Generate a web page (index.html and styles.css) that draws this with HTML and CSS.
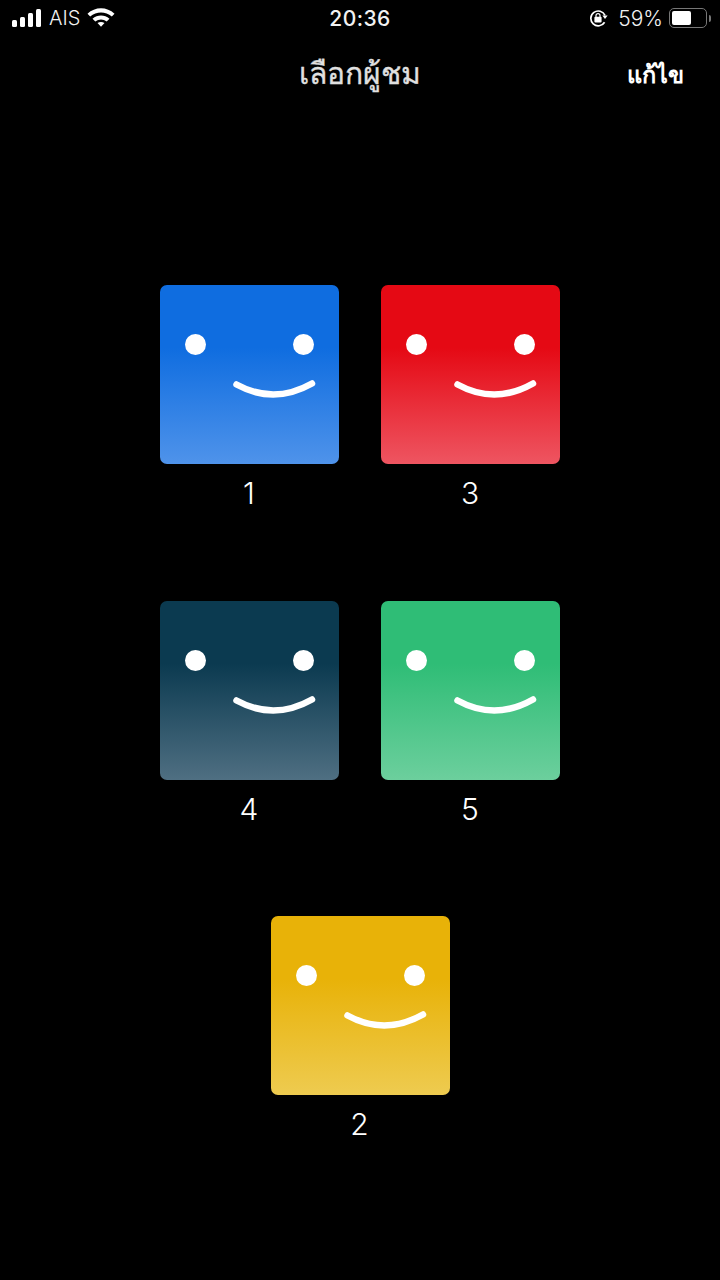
FILE: index.html
```html
<!DOCTYPE html>
<html lang="th">
<head>
    <meta charset="UTF-8">
    <meta name="viewport" content="width=device-width, initial-scale=1.0">
    <title>เลือกผู้ชม</title>
    <link rel="stylesheet" href="styles.css">
</head>
<body>
    <div class="status-bar">
        <div class="status-left">
            <div class="signal">
                <span class="bar bar-1"></span>
                <span class="bar bar-2"></span>
                <span class="bar bar-3"></span>
                <span class="bar bar-4"></span>
            </div>
            <span class="carrier">AIS</span>
            <svg class="wifi" width="28" height="20" viewBox="0 0 28 20">
                <path d="M.5 6.8C8 -.6 20 -.6 27.5 6.8L24.8 9.6C18.500 4 9.500 4 3.200 9.600Z" fill="#fff"/>
                <path d="M5.500 11.700C10.500 7.300 17.500 7.300 22.500 11.700L19.700 14.500C16.300 11.800 11.700 11.800 8.300 14.500Z" fill="#fff"/>
                <path d="M10.500 16C12.600 14.500 15.400 14.500 17.500 16L14 19.800Z" fill="#fff"/>
            </svg>
        </div>
        <div class="status-time">20:36</div>
        <div class="status-right">
            <svg class="rotation-lock" width="19" height="18" viewBox="0 0 19 18">
                <path d="M15.6 13.2A7.4 7.4 0 1 1 16 6.4" fill="none" stroke="#fff" stroke-width="1.7"/>
                <path d="M13.4 6.4H18.6L16 10Z" fill="#fff"/>
                <rect x="5.4" y="7.8" width="7.2" height="5.6" rx="1" fill="#fff"/>
                <path d="M7 8V6.6a2 2 0 0 1 4 0V8" fill="none" stroke="#fff" stroke-width="1.2"/>
            </svg>
            <span class="battery-text">59%</span>
            <div class="battery">
                <div class="battery-level"></div>
            </div>
            <div class="battery-cap"></div>
        </div>
    </div>

    <header class="nav-bar">
        <h1 class="nav-title">เลือกผู้ชม</h1>
        <a class="nav-edit" href="#">แก้ไข</a>
    </header>

    <main class="profiles">
        <div class="profile">
            <div class="avatar avatar-blue">
                <svg class="face" viewBox="0 0 179 179">
                    <circle cx="35.5" cy="59.5" r="10.5"/>
                    <circle cx="143.5" cy="59.5" r="10.5"/>
                    <path d="M76.5 99.5Q114 120 152 98.5"/>
                </svg>
            </div>
            <div class="profile-name">1</div>
        </div>
        <div class="profile">
            <div class="avatar avatar-red">
                <svg class="face" viewBox="0 0 179 179">
                    <circle cx="35.5" cy="59.5" r="10.5"/>
                    <circle cx="143.5" cy="59.5" r="10.5"/>
                    <path d="M76.5 99.5Q114 120 152 98.5"/>
                </svg>
            </div>
            <div class="profile-name">3</div>
        </div>
        <div class="profile">
            <div class="avatar avatar-navy">
                <svg class="face" viewBox="0 0 179 179">
                    <circle cx="35.5" cy="59.5" r="10.5"/>
                    <circle cx="143.5" cy="59.5" r="10.5"/>
                    <path d="M76.5 99.5Q114 120 152 98.5"/>
                </svg>
            </div>
            <div class="profile-name">4</div>
        </div>
        <div class="profile">
            <div class="avatar avatar-green">
                <svg class="face" viewBox="0 0 179 179">
                    <circle cx="35.5" cy="59.5" r="10.5"/>
                    <circle cx="143.5" cy="59.5" r="10.5"/>
                    <path d="M76.5 99.5Q114 120 152 98.5"/>
                </svg>
            </div>
            <div class="profile-name">5</div>
        </div>
        <div class="profile">
            <div class="avatar avatar-yellow">
                <svg class="face" viewBox="0 0 179 179">
                    <circle cx="35.5" cy="59.5" r="10.5"/>
                    <circle cx="143.5" cy="59.5" r="10.5"/>
                    <path d="M76.5 99.5Q114 120 152 98.5"/>
                </svg>
            </div>
            <div class="profile-name">2</div>
        </div>
    </main>
</body>
</html>
```

FILE: styles.css
```css
body {
    font-family: Inter, "Noto Sans", "DejaVu Sans", sans-serif;
    margin: 0;
    padding: 0;
    background-color: #000;
    color: #fff;
    height: 1280px;
    overflow: hidden;
}
/* Status bar */
.status-bar {
    display: grid;
    grid-template-columns: 1fr auto 1fr;
    align-items: center;
    height: 36px;
    padding: 0 9px 0 12px;
    font-size: 20px;
    color: #f2f2f2;
}
.status-left {
    display: flex;
    align-items: center;
}
.signal {
    display: flex;
    align-items: flex-end;
    gap: 3px;
    height: 18px;
}
.bar {
    width: 5px;
    background: #fff;
    border-radius: 1.5px;
}
.bar-1 { height: 7px; }
.bar-2 { height: 10px; }
.bar-3 { height: 14px; }
.bar-4 { height: 18px; }
.carrier {
    margin-left: 8px;
    font-size: 20px;
    font-weight: 300;
}
.wifi {
    margin-left: 7px;
    margin-top: -3px;
}
.status-time {
    font-size: 21px;
    font-weight: 500;
    letter-spacing: 0.4px;
    margin-left: -3px;
}
.status-right {
    display: flex;
    align-items: center;
    justify-content: flex-end;
}
.rotation-lock {
    margin-right: 10px;
}
.battery-text {
    font-size: 21px;
    font-weight: 300;
    margin-right: 6px;
}
.battery {
    box-sizing: border-box;
    width: 38px;
    height: 20px;
    border: 1.5px solid #777;
    border-radius: 5px;
    padding: 2px;
}
.battery-level {
    width: 59%;
    height: 100%;
    background: #fff;
    border-radius: 2px;
}
.battery-cap {
    width: 2px;
    height: 7px;
    margin-left: 2px;
    background: #777;
    border-radius: 0 2px 2px 0;
}
/* Title row */
.nav-bar {
    position: relative;
    display: flex;
    justify-content: flex-end;
    align-items: center;
    height: 76px;
    padding-right: 36px;
}
.nav-title {
    position: absolute;
    left: 0;
    right: 0;
    margin: 0 0 2px;
    text-align: center;
    font-size: 30px;
    font-weight: 400;
    color: #e0e0e0;
    -webkit-text-stroke: 0.3px #e0e0e0;
}
.nav-edit {
    position: relative;
    text-decoration: none;
    color: #fff;
    font-size: 23.5px;
    font-weight: bold;
}
/* Profile tiles */
.profiles {
    display: flex;
    flex-wrap: wrap;
    justify-content: center;
    column-gap: 42px;
    row-gap: 78px;
    width: 400px;
    margin: 173px auto 0;
}
.profile {
    width: 179px;
}
.avatar {
    height: 179px;
    border-radius: 7px;
}
.face {
    display: block;
    width: 179px;
    height: 179px;
    fill: #fff;
}
.face path {
    fill: none;
    stroke: #fff;
    stroke-width: 6.5px;
    stroke-linecap: round;
}
.avatar-blue { background: linear-gradient(#0f6de0 0%, #0f6de0 35%, #4f93ea 100%); }
.avatar-red { background: linear-gradient(#e50914 0%, #e50914 35%, #ee5561 100%); }
.avatar-navy { background: linear-gradient(#0b3a50 0%, #0b3a50 35%, #4f6f82 100%); }
.avatar-green { background: linear-gradient(#2fbd76 0%, #2fbd76 35%, #6ccf9d 100%); }
.avatar-yellow { background: linear-gradient(#e8b208 0%, #e8b208 35%, #eecb50 100%); }
.profile-name {
    height: 58.6px;
    line-height: 58.6px;
    text-align: center;
    font-size: 30px;
    font-weight: 300;
    padding-right: 1px;
    box-sizing: border-box;
}
```
